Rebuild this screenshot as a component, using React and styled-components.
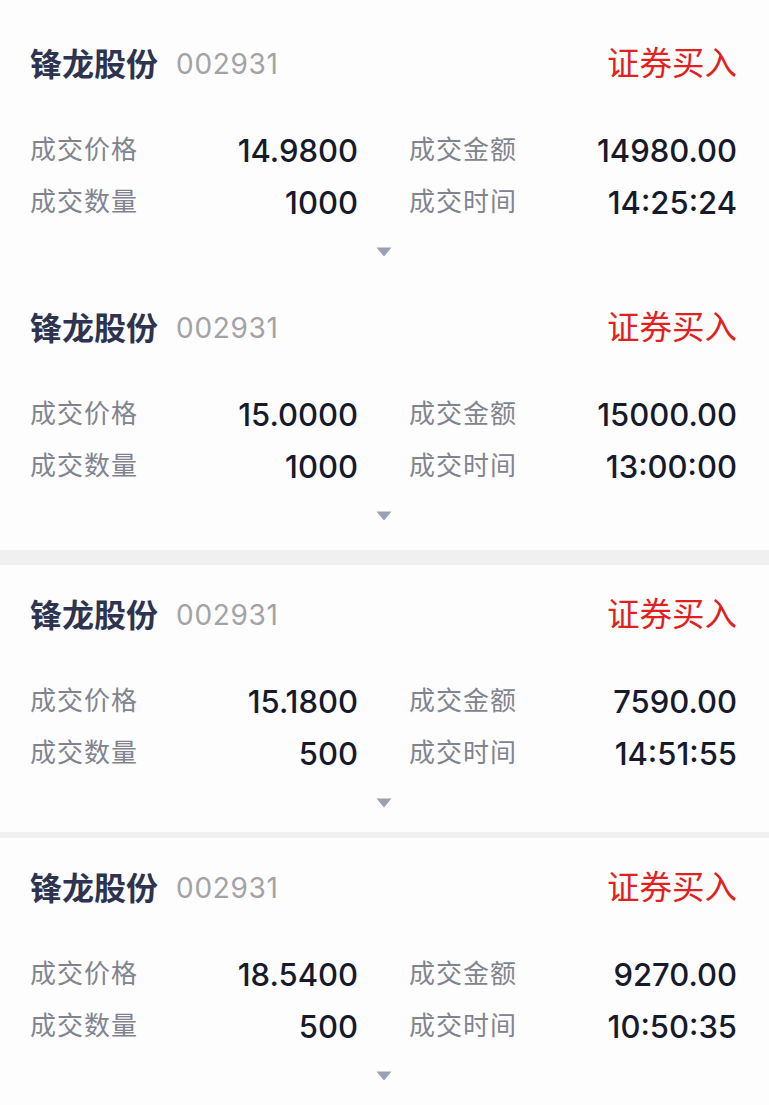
import styled, { createGlobalStyle } from "styled-components";

const GlobalStyle = createGlobalStyle`
  body {
    margin: 0;
    background-color: #fdfdfd;
    font-family: Inter, "Noto Sans CJK SC", sans-serif;
  }
`;

/////////////////////////////style/////////////////////////////
const Page = styled.div`
  padding-top: 14px;
  background-color: #fdfdfd;
`;

const Card = styled.div`
  padding: 30px 32px ${(p) => p.$pb}px 30px;
  background-color: #fdfdfd;
`;

const Header = styled.div`
  display: flex;
  align-items: center;
  justify-content: space-between;
  height: 40px;
`;

const Stock = styled.div`
  display: flex;
  align-items: center;
  gap: 18px;
`;

// CJK glyphs sit low in their em box, padding-bottom lifts them to the digits
const Name = styled.span`
  font-family: "Noto Sans CJK SC", sans-serif;
  font-size: 32px;
  font-weight: 700;
  color: #2e3350;
  line-height: 1;
  padding-bottom: 4px;
`;

const Code = styled.span`
  font-family: Inter, sans-serif;
  font-size: 28px;
  color: #a3a3a6;
  letter-spacing: 0.7px;
  line-height: 1;
`;

const Action = styled.span`
  font-family: "Noto Sans CJK SC", sans-serif;
  font-size: 32.5px;
  color: #e0221f;
  line-height: 1;
  padding-bottom: 6px;
`;

const Grid = styled.div`
  display: grid;
  grid-template-columns: 1fr 1fr;
  column-gap: 51px;
  margin-top: 40px;
`;

const Cell = styled.div`
  display: flex;
  align-items: center;
  justify-content: space-between;
  height: 52px;
`;

const Label = styled.span`
  font-family: "Noto Sans CJK SC", sans-serif;
  font-size: 26px;
  color: #81848f;
  letter-spacing: 1px;
  line-height: 1;
  padding-bottom: 4px;
`;

const Value = styled.span`
  font-family: Inter, sans-serif;
  font-size: 31px;
  font-weight: 500;
  color: #161a2a;
  line-height: 1;
`;

const Toggle = styled.div`
  display: flex;
  justify-content: center;
  margin-top: 19px;
`;

const Divider = styled.div`
  height: ${(p) => p.$h}px;
  background-color: #f0f0f1;
`;

const trades = [
  { price: "14.9800", amount: "14980.00", qty: "1000", time: "14:25:24", pb: 21, sep: 0 },
  { price: "15.0000", amount: "15000.00", qty: "1000", time: "13:00:00", pb: 29, sep: 15 },
  { price: "15.1800", amount: "7590.00", qty: "500", time: "14:51:55", pb: 24, sep: 6 },
  { price: "18.5400", amount: "9270.00", qty: "500", time: "10:50:35", pb: 24, sep: 0 },
];

function Arrow() {
  return (
    <svg width="16" height="10" viewBox="0 0 16 10">
      <path d="M0.5 0.5 H15.5 L8 9.5 Z" fill="#9aa0b6" />
    </svg>
  );
}

function App() {
  return (
    <Page>
      <GlobalStyle />
      {trades.map((t, i) => (
        <div key={i}>
          <Card $pb={t.pb}>
            <Header>
              <Stock>
                <Name>锋龙股份</Name>
                <Code>002931</Code>
              </Stock>
              <Action>证券买入</Action>
            </Header>
            <Grid>
              <Cell>
                <Label>成交价格</Label>
                <Value>{t.price}</Value>
              </Cell>
              <Cell>
                <Label>成交金额</Label>
                <Value>{t.amount}</Value>
              </Cell>
              <Cell>
                <Label>成交数量</Label>
                <Value>{t.qty}</Value>
              </Cell>
              <Cell>
                <Label>成交时间</Label>
                <Value>{t.time}</Value>
              </Cell>
            </Grid>
            <Toggle>
              <Arrow />
            </Toggle>
          </Card>
          {t.sep > 0 && <Divider $h={t.sep} />}
        </div>
      ))}
    </Page>
  );
}

export default App;
